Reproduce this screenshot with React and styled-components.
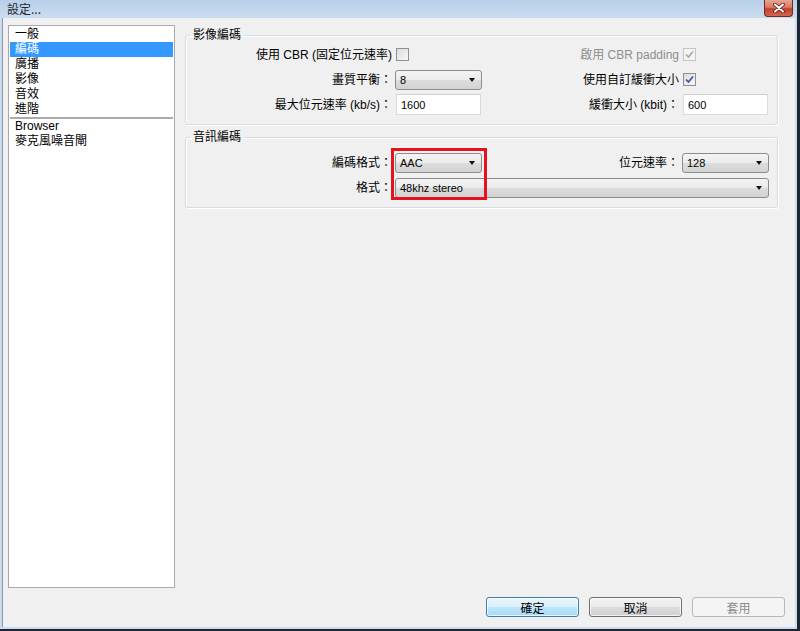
import React from 'react';
import styled, { createGlobalStyle } from 'styled-components';

const GlobalStyle = createGlobalStyle`
  html, body {
    margin: 0;
    padding: 0;
    overflow: hidden;
    background: #1b2632;
  }
  body {
    font-family: "Liberation Sans", "Noto Sans CJK TC", sans-serif;
    font-size: 12px;
    color: #000;
  }
`;

// outer window frame (light blue aero border)
const Frame = styled.div`
  width: 797px;
  height: 629px;
  display: flex;
  flex-direction: column;
  background: linear-gradient(to bottom, #b9d0e9 0%, #cadcf0 18px, #c9dcf1 100%);
`;

const TitleBar = styled.div`
  height: 18px;
  flex: none;
  display: flex;
  justify-content: space-between;
  align-items: flex-start;
  padding-left: 7px;
`;

const TitleText = styled.span`
  font-family: "Noto Sans CJK TC", sans-serif;
  font-size: 12px;
  line-height: 18px;
  color: #1e2630;
`;

const CloseButton = styled.div`
  width: 29px;
  height: 17px;
  margin-right: 4px;
  box-sizing: border-box;
  border: 1px solid #6e2b22;
  border-top: none;
  border-radius: 0 0 4px 4px;
  background: linear-gradient(to bottom, #e8a493 0%, #d77a64 45%, #c2402a 55%, #d2674f 100%);
  display: flex;
  align-items: center;
  justify-content: center;
`;

const Client = styled.div`
  flex: 1;
  margin: 0 2px 2px 2px;
  background: #f0f0f0;
  border-left: 1px solid #8797a8;
  display: flex;
  flex-direction: column;
  padding: 7px 0 0 5px;
`;

const Body = styled.div`
  display: flex;
  gap: 10px;
  height: 563px;
`;

const Sidebar = styled.div`
  width: 167px;
  box-sizing: border-box;
  border: 1px solid #a9a9a9;
  background: #fff;
  padding: 1px;
`;

const NavItem = styled.div`
  height: 15px;
  line-height: 15px;
  padding-left: 5px;
  font-size: 12px;
  white-space: nowrap;
  background: ${p => (p.$active ? '#3399ff' : 'transparent')};
  color: ${p => (p.$active ? '#fff' : '#000')};
`;

const NavSeparator = styled.div`
  height: 2px;
  background: #aaaaaa;
`;

const Panel = styled.div`
  width: 593px;
  display: flex;
  flex-direction: column;
  gap: 5px;
  padding-top: 3px;
`;

const Group = styled.fieldset`
  margin: 0;
  min-width: 0;
  padding: ${p => p.$padTop}px 8px 9px 4px;
  border: 1px solid #d5dce3;
  border-radius: 3px;
  box-shadow: inset 1px 1px 0 #ffffff, 1px 1px 0 #ffffff;
`;

const Legend = styled.legend`
  padding: 0 3px;
  font-size: 12px;
  line-height: 14px;
`;

const FormGrid = styled.div`
  position: relative;
  display: grid;
  grid-template-columns: 202px 87px 194px 87px;
  grid-auto-rows: 21px;
  column-gap: 3px;
  row-gap: 4px;
  align-items: center;
`;

const Label = styled.div`
  text-align: right;
  white-space: nowrap;
  font-size: 12px;
  line-height: 14px;
  color: ${p => (p.$disabled ? '#8d8d8d' : '#000')};
`;

const CheckBox = styled.div`
  width: 13px;
  height: 13px;
  box-sizing: border-box;
  margin-left: 1px;
  border: 1px solid ${p => (p.$disabled ? '#c4c4c4' : '#8e8f8f')};
  background: ${p => (p.$disabled
    ? '#f4f4f4'
    : 'linear-gradient(135deg, #dcdcdc 0%, #f7f7f7 100%)')};
  display: flex;
  align-items: center;
  justify-content: center;
`;

const Combo = styled.div`
  grid-column: ${p => (p.$wide ? '2 / 5' : 'auto')};
  height: 20px;
  box-sizing: border-box;
  border: 1px solid #8c8c8c;
  border-radius: 3px;
  background: linear-gradient(to bottom, #f4f4f4 0%, #ebebeb 50%, #dcdcdc 52%, #d3d3d3 100%);
  display: flex;
  align-items: center;
  justify-content: space-between;
  padding: 0 6px 0 4px;
  font-size: 11px;
  color: #000;
`;

const Arrow = styled.span`
  width: 0;
  height: 0;
  border-left: 3.5px solid transparent;
  border-right: 3.5px solid transparent;
  border-top: 4px solid #111;
`;

const TextBox = styled.div`
  height: 21px;
  box-sizing: border-box;
  margin: 0 1px;
  background: #fff;
  border: 1px solid #dadada;
  border-top-color: #cfcfcf;
  display: flex;
  align-items: center;
  padding-left: 4px;
  font-size: 11px;
`;

// red annotation drawn over the codec / format combos
const Highlight = styled.div`
  position: absolute;
  grid-column: 2 / 3;
  grid-row: 1 / 3;
  inset: -4px -5px -2px -4px;
  border: 3px solid #e5141c;
  pointer-events: none;
`;

const Footer = styled.div`
  display: flex;
  justify-content: flex-end;
  gap: 10px;
  padding-right: 10px;
  margin-top: 9px;
`;

const Button = styled.div`
  width: 93px;
  height: 20px;
  box-sizing: border-box;
  border-radius: 3px;
  display: flex;
  align-items: center;
  justify-content: center;
  font-family: "Noto Sans CJK TC", sans-serif;
  font-size: 12px;
  border: 1px solid ${p => ({ primary: '#3c7fb1', normal: '#707070', disabled: '#b5b9bc' }[p.$variant])};
  color: ${p => (p.$variant === 'disabled' ? '#8a8a8a' : '#000')};
  background: ${p => ({
    primary: 'linear-gradient(to bottom, #eaf6fd 0%, #d9f0fc 50%, #bee6fd 52%, #a7d9f5 100%)',
    normal: 'linear-gradient(to bottom, #f2f2f2 0%, #ebebeb 50%, #dddddd 52%, #cfcfcf 100%)',
    disabled: '#f4f4f4',
  }[p.$variant])};
  box-shadow: inset 0 0 0 1px ${p => (p.$variant === 'disabled' ? '#f4f4f4' : 'rgba(255,255,255,0.7)')};
`;

const CheckMark = ({ color }) => (
  <svg width="11" height="11" viewBox="0 0 11 11">
    <path d="M2 5.5 L4.5 8 L9 2.5" fill="none" stroke={color} strokeWidth="1.7" />
  </svg>
);

const CloseGlyph = () => (
  <svg width="12" height="10" viewBox="0 0 12 10">
    <path d="M2 1.5 L10 8.5 M10 1.5 L2 8.5" stroke="#5b1a12" strokeWidth="3.6" strokeLinecap="round" />
    <path d="M2 1.5 L10 8.5 M10 1.5 L2 8.5" stroke="#ffffff" strokeWidth="2" strokeLinecap="round" />
  </svg>
);

const navTop = ['一般', '編碼', '廣播', '影像', '音效', '進階'];
const navBottom = ['Browser', '麥克風噪音閘'];

export default function App() {
  return (
    <>
      <GlobalStyle />
      <Frame>
        <TitleBar>
          <TitleText>設定...</TitleText>
          <CloseButton><CloseGlyph /></CloseButton>
        </TitleBar>
        <Client>
          <Body>
            <Sidebar>
              {navTop.map(name => (
                <NavItem key={name} $active={name === '編碼'}>{name}</NavItem>
              ))}
              <NavSeparator />
              {navBottom.map(name => (
                <NavItem key={name}>{name}</NavItem>
              ))}
            </Sidebar>
            <Panel>
              <Group $padTop={2}>
                <Legend>影像編碼</Legend>
                <FormGrid>
                  <Label>使用 CBR (固定位元速率)</Label>
                  <CheckBox />
                  <Label $disabled>啟用 CBR padding</Label>
                  <CheckBox $disabled><CheckMark color="#a8a8a8" /></CheckBox>

                  <Label>畫質平衡：</Label>
                  <Combo>8<Arrow /></Combo>
                  <Label>使用自訂緩衝大小</Label>
                  <CheckBox><CheckMark color="#3b5a94" /></CheckBox>

                  <Label>最大位元速率 (kb/s)：</Label>
                  <TextBox>1600</TextBox>
                  <Label>緩衝大小 (kbit)：</Label>
                  <TextBox>600</TextBox>
                </FormGrid>
              </Group>
              <Group $padTop={8}>
                <Legend>音訊編碼</Legend>
                <FormGrid>
                  <Label>編碼格式：</Label>
                  <Combo>AAC<Arrow /></Combo>
                  <Label>位元速率：</Label>
                  <Combo>128<Arrow /></Combo>

                  <Label>格式：</Label>
                  <Combo $wide>48khz stereo<Arrow /></Combo>
                  <Highlight />
                </FormGrid>
              </Group>
            </Panel>
          </Body>
          <Footer>
            <Button $variant="primary">確定</Button>
            <Button $variant="normal">取消</Button>
            <Button $variant="disabled">套用</Button>
          </Footer>
        </Client>
      </Frame>
    </>
  );
}
